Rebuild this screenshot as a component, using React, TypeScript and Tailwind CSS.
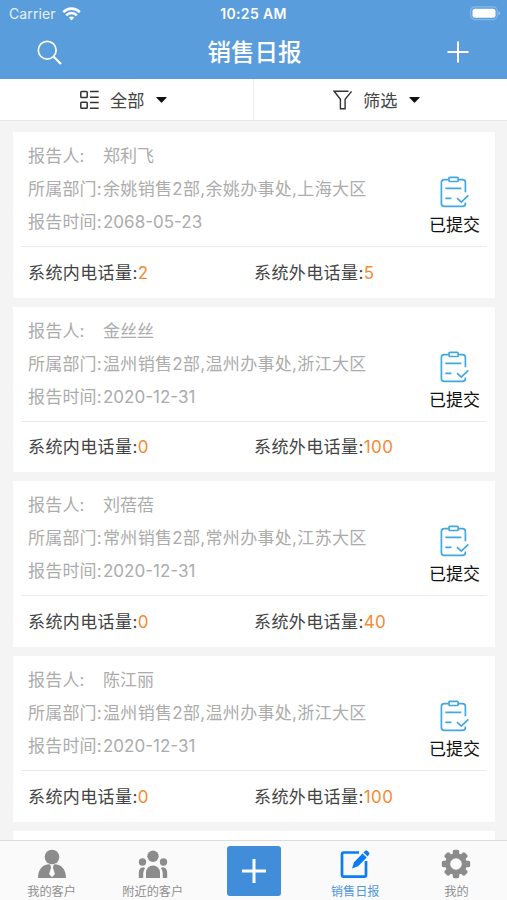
import React from "react";

type Report = {
  name: string;
  department: string;
  date: string;
  internal: string;
  external: string;
};

const reports: Report[] = [
  { name: "郑利飞", department: "余姚销售2部,余姚办事处,上海大区", date: "2068-05-23", internal: "2", external: "5" },
  { name: "金丝丝", department: "温州销售2部,温州办事处,浙江大区", date: "2020-12-31", internal: "0", external: "100" },
  { name: "刘蓓蓓", department: "常州销售2部,常州办事处,江苏大区", date: "2020-12-31", internal: "0", external: "40" },
  { name: "陈江丽", department: "温州销售2部,温州办事处,浙江大区", date: "2020-12-31", internal: "0", external: "100" },
];

function StatusBar() {
  return (
    <div className="grid h-[27px] grid-cols-3 items-center pl-[9px] pr-[6px] text-[14px] leading-none">
      <div className="flex items-center gap-[6px]">
        <span className="text-[14px] tracking-[0.1px] text-[#e6f1fb]">Carrier</span>
        <svg width="19" height="14" viewBox="0 0 19 14" fill="none" stroke="#fff" strokeWidth="2.6">
          <path d="M1.2 5.1C6 .5 13 .5 17.8 5.1" />
          <path d="M4.2 8.2c3-2.9 7.600-2.900 10.600 0" />
          <path d="M9.500 13.400l-2.700-2.900c1.500-1.400 3.900-1.400 5.400 0z" fill="#fff" stroke="none" />
        </svg>
      </div>
      <span className="-mr-[1px] ml-[-4px] pt-px text-center font-semibold tracking-[0.35px]">10:25 AM</span>
      <svg className="justify-self-end" width="31" height="15" viewBox="0 0 31 15">
        <rect x=".7" y=".8" width="26.500" height="12.800" rx="4" fill="none" stroke="#84b7e8" strokeWidth="1.200" />
        <rect x="2.500" y="2.700" width="23" height="9" rx="2.500" fill="#fff" />
        <path d="M28.500 5c2 .8 2 3.600 0 4.400z" fill="#9cc6ee" />
      </svg>
    </div>
  );
}

function Header() {
  return (
    <header className="h-[79px] shrink-0 bg-[#5a9ddd] text-white">
      <StatusBar />
      <div className="flex h-[50px] items-center justify-between pl-[37px] pr-[38px]">
        <svg width="25" height="25" viewBox="0 0 25 25" fill="none" stroke="#fff" strokeWidth="1.700">
          <circle cx="10.200" cy="10.200" r="8.900" />
          <path d="M16.500 16.500l7.500 7.500" strokeWidth="2.200" />
        </svg>
        <h1 className="pt-px text-[23.5px] leading-none font-medium">销售日报</h1>
        <svg width="22" height="22" viewBox="0 0 22 22" stroke="#fff" strokeWidth="2">
          <path d="M11 .5v21M.5 11h21" />
        </svg>
      </div>
    </header>
  );
}

function Caret() {
  return (
    <svg className="ml-[12px]" width="11" height="6" viewBox="0 0 11 6">
      <path d="M.8 0h9.400q.9.100.3.800L6.200 5.300q-.7.700-1.400 0L.5.800Q0 .1.800 0z" fill="#111" />
    </svg>
  );
}

function FilterBar() {
  return (
    <div className="flex h-[42px] shrink-0 border-b border-[#e9e9e9] bg-white text-[17.2px] leading-none text-[#444]">
      <div className="flex w-[254px] items-center border-r border-[#ededed] pl-[80px]">
        <svg width="19" height="20" viewBox="0 0 19 20" fill="none" stroke="#333" strokeWidth="1.500">
          <rect x=".8" y="1.500" width="6.400" height="6" rx=".8" />
          <rect x=".8" y="12.200" width="6.400" height="6" rx=".8" />
          <path d="M10 1.500h8.700M10 7.200h8.700M10 12.500h8.700M10 18.200h8.700" />
        </svg>
        <span className="ml-[11px] pt-[2px]">全部</span>
        <Caret />
      </div>
      <div className="flex flex-1 items-center pl-[79px]">
        <svg width="20" height="20" viewBox="0 0 20 20" fill="none" stroke="#333" strokeWidth="1.400">
          <path d="M15.500 1.300H1.200l6.200 7.900v9.500h4.700V9.200l6.500-7.800" />
        </svg>
        <span className="ml-[10px] pt-[2px]">筛选</span>
        <Caret />
      </div>
    </div>
  );
}

function Clipboard() {
  return (
    <svg width="29" height="32" viewBox="0 0 29 32" fill="none" stroke="#42a7de" strokeWidth="1.700">
      <path d="M8.500 3.600H4.300Q1.400 3.600 1.400 6.500V27.500q0 2.900 2.900 2.900H22.500q2.900 0 2.900-2.900v-1M25.400 16.200V6.500q0-2.900-2.900-2.900H18.600" />
      <rect x="9" y="1.300" width="9.200" height="4.200" rx="1" />
      <path d="M5.300 12.300h16M5.300 22.400h6.200M17 22.200l4.300 4 7-6.800" />
    </svg>
  );
}

function Field({ label, children }: { label: string; children: React.ReactNode }) {
  return (
    <div className="flex h-[33px] items-center whitespace-nowrap">
      <span className="w-[75px] tracking-[0.2px]">{label}</span>
      {children}
    </div>
  );
}

function ReportCard({ report }: { report: Report }) {
  return (
    <article className="h-[165.7px] shrink-0 bg-white px-2 pt-[7px] text-[17px] leading-none">
      <div className="flex h-[108px] justify-between border-b border-[#ebebeb] pl-[7px] pr-[7px]">
        <div className="pt-px text-[#acacac]">
          <Field label="报告人:"><span>{report.name}</span></Field>
          <Field label="所属部门:"><span className="tracking-[0.32px]">{report.department}</span></Field>
          <Field label="报告时间:"><span>{report.date}</span></Field>
        </div>
        <div className="flex flex-col items-center pt-[37px] text-[#111]">
          <Clipboard />
          <span className="mt-[9px]">已提交</span>
        </div>
      </div>
      <div className="grid h-[52px] grid-cols-[226px_1fr] items-center pl-[7px] tracking-[0.4px] text-[#444]">
        <span>系统内电话量:<span className="text-[#f58a32]">{report.internal}</span></span>
        <span>系统外电话量:<span className="text-[#f58a32]">{report.external}</span></span>
      </div>
    </article>
  );
}

function CustomerIcon() {
  return (
    <svg width="30" height="30" viewBox="0 0 30 30" fill="#8c8c8c">
      <circle cx="15" cy="8" r="7.300" />
      <path d="M1 29C1 20.500 5.500 15.300 12.500 15.300L15 17l2.500-1.700C24.500 15.300 29 20.500 29 29z" />
      <path d="M13.300 16.200h3.400l-.8 2.300 2 6.500-2.900 3.200-2.900-3.200 2-6.500z" fill="#fafafa" />
    </svg>
  );
}

function NearbyIcon() {
  return (
    <svg width="30" height="30" viewBox="0 0 30 30" fill="#8c8c8c">
      <circle cx="15" cy="7.200" r="5.700" />
      <circle cx="4.500" cy="13" r="3.700" />
      <circle cx="25.500" cy="13" r="3.700" />
      <path d="M8 29V23.500a7 7 0 0 1 14 0V29zM.8 29V23.500Q1 18.800 5.200 18.200L7.200 19Q5.200 21 5.200 24.500V29zM29.200 29V23.500q-.2-4.700-4.400-5.300L22.800 19q2 2 2 5.500V29z" />
    </svg>
  );
}

function ReportIcon() {
  return (
    <svg width="30" height="30" viewBox="0 0 30 30" fill="none">
      <path d="M19 3.500H3.700Q2 3.500 2 5.200V26q0 1.700 1.700 1.700H24.300Q26 27.700 26 26V12" stroke="#0a7cf5" strokeWidth="2.700" />
      <path d="M12 19.500L14 13.200 22.500 4.500l4.200 4-8.600 8.700zM23.500 3.500l1.700-1.700q1-.9 2 0l1.800 1.800q.9 1 0 2L27.700 7.400z" fill="#0a7cf5" />
    </svg>
  );
}

const gearTeeth = [0, 45, 90, 135, 180, 225, 270, 315];

function GearIcon() {
  return (
    <svg width="30" height="30" viewBox="0 0 30 30">
      {gearTeeth.map((angle) => (
        <rect key={angle} x="11.800" y=".8" width="6.400" height="8" rx="1.600" fill="#8c8c8c" transform={`rotate(${angle} 15 15)`} />
      ))}
      <circle cx="15" cy="15" r="8.300" fill="none" stroke="#8c8c8c" strokeWidth="5" />
    </svg>
  );
}

function Tab({ label, active = false, children }: { label: string; active?: boolean; children: React.ReactNode }) {
  return (
    <div className="flex flex-col items-center pt-[8px]">
      {children}
      <span className={`mt-[7px] whitespace-nowrap text-[12.2px] leading-none ${active ? "text-[#4f97df]" : "text-[#909090]"}`}>{label}</span>
    </div>
  );
}

function TabBar() {
  return (
    <nav className="grid h-[60px] shrink-0 grid-cols-5 border-t border-[#dcdcdc] bg-[#fafafa] pl-px">
      <Tab label="我的客户"><CustomerIcon /></Tab>
      <Tab label="附近的客户"><NearbyIcon /></Tab>
      <div className="flex justify-center pt-[5px]">
        <div className="flex h-[50px] w-[54px] items-center justify-center rounded-[3px] bg-[#428dda]">
          <svg width="24" height="24" viewBox="0 0 24 24" stroke="#fff" strokeWidth="3">
            <path d="M12 0v24M0 12h24" />
          </svg>
        </div>
      </div>
      <Tab label="销售日报" active><ReportIcon /></Tab>
      <Tab label="我的"><GearIcon /></Tab>
    </nav>
  );
}

export default function App() {
  return (
    <div className="flex h-[900px] w-[507px] flex-col overflow-hidden bg-[#f4f4f4] font-['Inter','Noto_Sans_CJK_SC',sans-serif]">
      <Header />
      <FilterBar />
      <main className="flex min-h-0 flex-1 flex-col gap-[9px] overflow-hidden pl-[13px] pr-[12px] pt-[11px]">
        {reports.map((report) => (
          <ReportCard key={report.name} report={report} />
        ))}
        <div className="h-[165px] shrink-0 bg-white" />
      </main>
      <TabBar />
    </div>
  );
}
